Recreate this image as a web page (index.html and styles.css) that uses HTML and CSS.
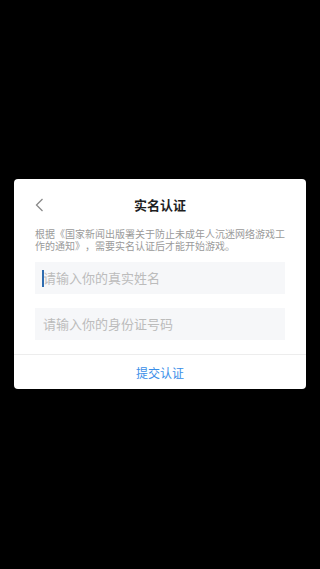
FILE: index.html
```html
<!DOCTYPE html>
<html lang="zh">
<head>
    <meta charset="UTF-8" />
    <meta name="viewport" content="width=device-width, initial-scale=1.0" />
    <title>实名认证</title>
    <link rel="stylesheet" href="styles.css">
</head>
<body>

    <!-- 遮罩 -->
    <div class="mask">
        <!-- 实名认证弹窗 -->
        <div class="dialog">
            <div class="dialog-header">
                <span class="back">
                    <svg width="9" height="14" viewBox="0 0 9 14">
                        <path d="M7.5 1 L1.5 7 L7.5 13" fill="none" stroke="#8a8a8a" stroke-width="1.3" />
                    </svg>
                </span>
                <h2 class="title">实名认证</h2>
            </div>
            <div class="dialog-body">
                <p class="notice">根据《国家新闻出版署关于防止未成年人沉迷网络游戏工作的通知》，需要实名认证后才能开始游戏。</p>
                <div class="field focused">请输入你的真实姓名</div>
                <div class="field">请输入你的身份证号码</div>
            </div>
            <div class="dialog-footer">
                <a class="submit" href="javascript:;">提交认证</a>
            </div>
        </div>
    </div>

</body>
</html>
```

FILE: styles.css
```css
html, body {
    height: 100%;
    margin: 0;
    padding: 0;
    background: #000;
    font-family: "Noto Sans CJK SC", "Noto Sans", sans-serif;
}

/* 遮罩层 */
.mask {
    height: 100%;
    display: flex;
    justify-content: center;
    align-items: flex-start;
    padding-top: 179px;
    box-sizing: border-box;
}

/* 弹窗 */
.dialog {
    width: 292px;
    background: #fff;
    border-radius: 4px;
    overflow: hidden;
}

.dialog-header {
    position: relative;
    height: 49px;
    display: flex;
    align-items: center;
    justify-content: center;
}

.back {
    position: absolute;
    left: 21px;
    top: 19px;
    line-height: 0;
}

.title {
    margin: 0;
    font-size: 13px;
    font-weight: bold;
    color: #1f1f1f;
    padding-top: 2px;
}

.dialog-body {
    padding: 0 21px 14px;
}

/* 提示文字 */
.notice {
    margin: 0 0 10px;
    font-size: 10px;
    line-height: 12px;
    color: #9a9a9a;
    text-spacing-trim: space-all;
}

/* 输入框 */
.field {
    position: relative;
    height: 32px;
    line-height: 32px;
    padding-left: 8px;
    background: #f6f7f9;
    font-size: 13px;
    color: #bcbcbc;
}

.field + .field {
    margin-top: 14px;
}

/* 光标 */
.field.focused::before {
    content: "";
    position: absolute;
    left: 7px;
    top: 8px;
    width: 1.5px;
    height: 17px;
    background: #2e6cb0;
}

.dialog-footer {
    border-top: 1px solid #ededed;
    height: 34px;
    display: flex;
    align-items: center;
    justify-content: center;
}

.submit {
    font-size: 12px;
    color: #3a8ee8;
    text-decoration: none;
}
```
